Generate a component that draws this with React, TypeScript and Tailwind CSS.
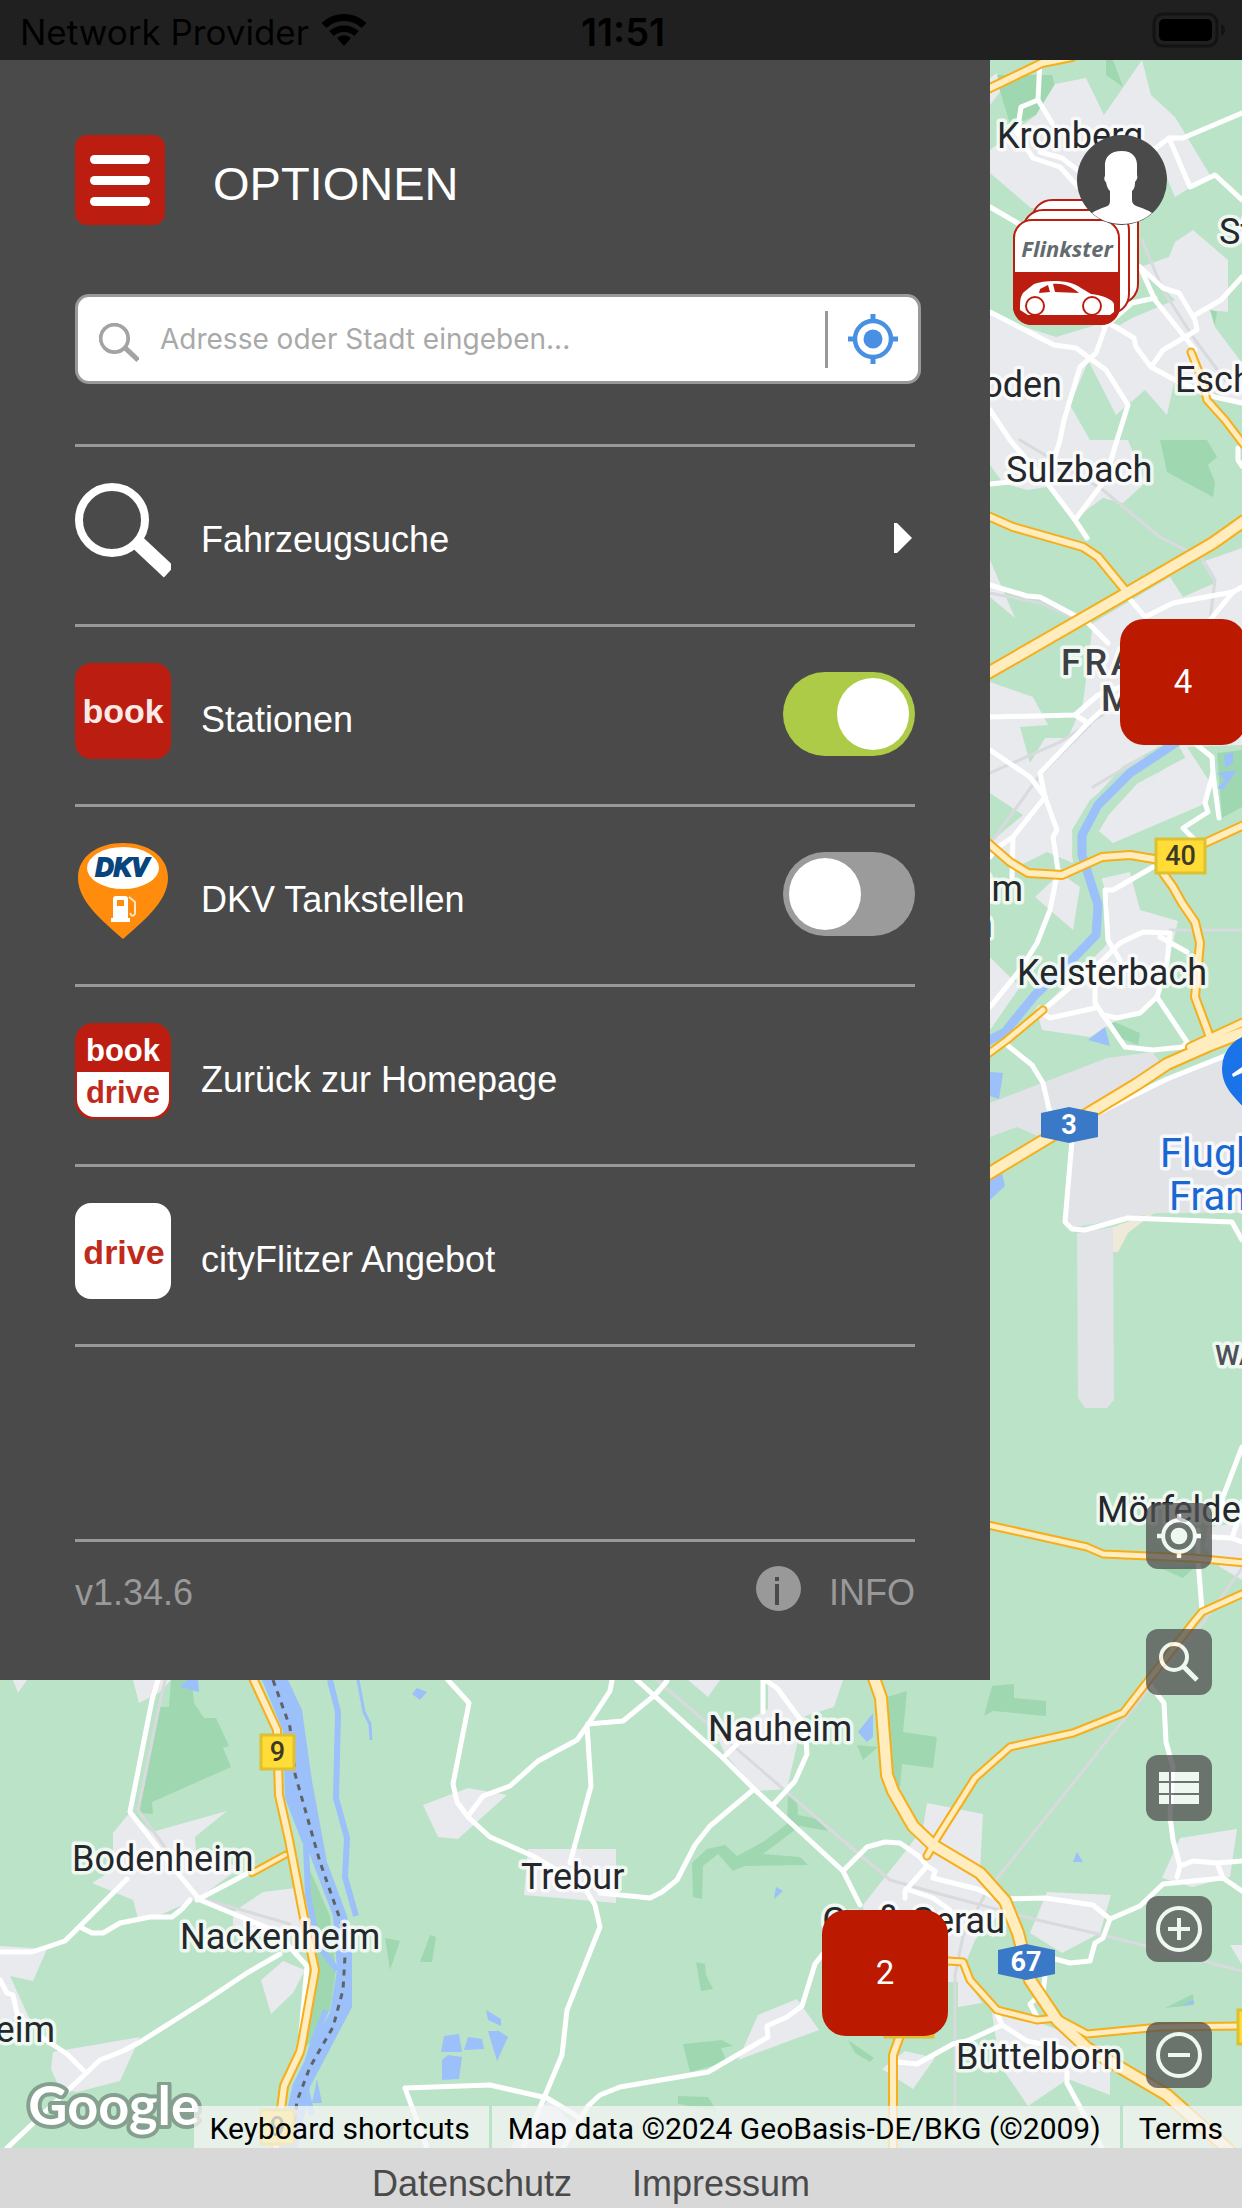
import { useState } from "react";
import type { ReactNode } from "react";

const HELVETICA = "font-['Liberation_Sans',Arial,sans-serif]";
const ROBOTO = "font-['Roboto',sans-serif]";

/* ---------- map data ---------- */

const urban = [
  "1055,84 1086,78 1104,115 1142,60 1151,95 1175,117 1210,175 1175,197 1161,163 1150,190 1136,200 1031,208 990,173 990,150 1036,115",
  "990,78 997,73 1000,92 990,105",
  "1140,267 1169,257 1175,242 1193,230 1228,260 1228,312 1210,310 1215,327 1242,363 1242,403 1175,378 1167,415 1145,390 1116,415 1088,360 1078,355 1056,337 1106,322 1120,325 1132,318 1175,300",
  "995,317 1056,337 1092,352 1070,405 1090,440 1128,440 1145,483 1123,503 1103,498 1073,520 1047,487 1027,490 1003,483 990,465 990,312",
  "1035,345 1043,355 1041,370",
  "990,560 1015,618 990,597",
  "990,682 1033,697 1048,725 1020,727 1030,763 1045,738 1068,738 1083,703 1093,623 1170,577 1183,597 1215,583 1202,562 1242,548 1242,745 1187,747 1143,787 1135,780 1160,745 1090,800 1072,830 1073,863 1047,852 1015,868 993,840 1023,815 990,793",
  "1187,747 1213,787 1202,805 1113,843 1094,827 1135,780 1143,787",
  "1035,897 1060,873 1080,887 1073,930",
  "1095,880 1130,872 1140,910 1178,921 1160,997 1140,1013 1117,1020 1090,1037 1042,1030 1036,1008 1070,977 1103,933",
  "990,957 1020,987 990,1030",
  "1207,1527 1242,1523 1242,1580 1220,1567 1205,1547",
  "133,1680 171,1680 160,1692 139,1703",
  "13,1680 27,1680 18,1693",
  "130,1812 152,1832 227,1811 195,1837 196,1850 240,1868 200,1897 160,1915 138,1918 133,1900 92,1883 113,1870 113,1833",
  "233,1912 263,1892 295,1888 307,1935 270,1935 233,1925",
  "261,1980 283,1961 305,1970 293,1993 271,2014",
  "0,1946 47,1949 33,1981 10,1976 30,2020 0,2020",
  "53,2052 140,2037 120,2081 77,2092 60,2089 51,2069",
  "768,1680 843,1680 834,1707 805,1716 797,1745 787,1789 757,1791 725,1754 717,1737 768,1709",
  "688,1680 720,1680 708,1697",
  "423,1805 468,1788 507,1795 458,1839 438,1837",
  "528,1849 616,1849 616,1903 524,1895",
  "758,2015 797,1999 819,2030 738,2060",
  "548,2100 575,2125 563,2148 510,2148",
  "927,1803 983,1814 980,1870 1008,1905 975,1940 958,1982 870,1982 863,1905 907,1849 923,1828",
  "992,2013 1040,2023 1087,2041 1110,2060 1110,2095 1068,2079 1028,2106 1000,2065",
  "1047,1892 1111,1895 1100,1933 1062,1953 1030,1933",
  "1180,1838 1237,1829 1230,1877 1192,1887 1162,1878",
  "958,1964 982,2003 958,2007",
  "905,2051 935,2058 913,2089 882,2069",
  "1230,1945 1242,1945 1242,1965",
];

const airport = [
  "990,1103 1107,1058 1152,1052 1165,1068 1080,1120 1040,1137 1017,1127 990,1137",
  "1095,1112 1167,1077 1242,1047 1242,1213 1157,1213 1070,1228 1063,1220 1070,1140",
  "1077,1233 1113,1227 1114,1400 1107,1408 1085,1408 1078,1398",
];

const forest = [
  "995,75 1052,75 1062,113 1040,113 1011,127",
  "1106,60 1113,60 1123,87 1106,75",
  "1160,440 1207,440 1217,457 1208,465 1215,482 1213,497 1187,483 1167,472",
  "1195,302 1217,312 1214,330",
  "1110,1020 1140,1033 1138,1045 1120,1038",
  "1217,753 1242,750 1242,807 1222,818",
  "1225,613 1232,613 1236,622 1220,622",
  "171,1680 192,1680 194,1703 204,1718 216,1718 229,1746 223,1748 231,1767 168,1795 152,1802 153,1814 139,1813 160,1707 169,1707",
  "309,1868 330,1916 336,1970 330,2010 312,2040 304,2050 316,1970 310,1920",
  "385,1938 400,1941 390,1970",
  "692,1863 707,1849 725,1845 737,1856 763,1842 787,1824 788,1796 797,1800 798,1815 818,1819 828,1831 800,1826 763,1854 800,1857 808,1865 745,1866 733,1871 718,1854 703,1866 702,1899 693,1897",
  "696,1962 705,1964 706,1975 713,1989 701,1991",
  "430,1935 436,1937 432,1962 420,1962",
  "683,2044 722,2040 733,2046 721,2048 727,2062 690,2072",
  "678,2096 708,2097 717,2111 678,2104",
  "887,1697 907,1691 903,1732 937,1737 933,1768 902,1764 900,1787 893,1787",
  "857,1745 878,1747 863,1760",
  "992,1686 1014,1684 1014,1698 1046,1701 1046,1716 993,1711 984,1716",
  "848,2040 874,2058 870,2062 855,2053",
  "1165,2008 1193,1994 1194,2005",
  "1160,1568 1196,1566 1183,1578",
];

const water = [
  "1224,755 1233,752 1233,763 1225,768",
  "1217,773 1237,770 1223,790 1217,788 1225,780",
  "1088,1040 1105,1027 1110,1046",
  "990,1072 1003,1073 999,1099 990,1096",
  "990,1200 1005,1186 1002,1173 990,1180",
  "180,1687 187,1680 198,1680 199,1692",
  "262,1680 283,1731 285,1798 302,1842 310,1855 333,1916 337,1970 330,2012 308,2054 293,2084 285,2118 281,2148 298,2148 310,2087 352,2007 352,1949 347,1916 327,1862 312,1781 302,1710 288,1680",
  "317,2079 322,2103 312,2103",
  "412,1694 417,1688 427,1692 420,1700",
  "486,2010 501,2019 501,2026 488,2020",
  "444,2036 459,2034 462,2052 441,2052",
  "468,2037 482,2039 484,2049 464,2050",
  "488,2031 499,2031 508,2037 497,2061",
  "448,2055 462,2057 459,2079 442,2080 442,2060",
  "776,1887 783,1891 774,1899",
  "858,1732 873,1713 873,1737 867,1742",
  "1073,1862 1077,1852 1083,1862",
  "1180,2006 1193,2000 1194,2004",
];

const streams = [
  "330,1680 338,1712 336,1798 347,1838 345,1877 356,1916",
  "306,1845 308,1895 318,1945 337,1970",
  "326,2010 314,2040 308,2060",
  "306,2090 312,2115",
];

const rails = [
  "1142,240 1163,290 1195,340 1225,380",
  "1020,440 1103,490 1160,537 1202,558 1215,580 1210,620",
  "990,593 1040,603 1090,625",
  "990,773 1060,742 1110,710",
  "993,840 1040,775 1090,725",
  "1093,787 1143,757",
  "1170,930 1242,930",
  "657,1680 840,1838 890,1880 940,1894 1033,1919 1107,1936 1242,1971",
  "1242,1568 1205,1620 1125,1718 987,1891 963,1936 955,1975 955,2146",
  "165,1680 158,1712 138,1810 180,1868",
  "200,1898 290,1924",
];

const roads = [
  "1040,60 1038,100 1021,107 1017,133 1033,158 1060,167 1078,187",
  "1038,100 1052,123",
  "1040,152 1062,158 1080,172",
  "1100,165 1156,148 1169,138 1183,138 1242,113",
  "1169,138 1190,187 1215,175 1242,200",
  "990,207 1021,225",
  "990,312 1054,345 1076,348 1106,370 1128,405 1117,440 1105,480 1075,520",
  "1106,325 1096,353 1080,367 1064,420 1060,440 1047,483 1075,520 1087,538",
  "990,410 1010,440 1040,475",
  "1140,267 1155,300 1195,350",
  "1140,267 1163,288 1179,293 1195,320 1197,330 1163,350 1151,367 1136,347 1134,338 1112,325",
  "1195,315 1221,300 1242,277",
  "1104,327 1132,303 1155,298",
  "1151,367 1175,380 1215,397 1242,403",
  "990,484 1010,482",
  "1238,448 1238,460 1242,466",
  "990,585 1027,596 1040,597 1087,622 1108,643",
  "1128,597 1145,617 1173,603 1233,592 1242,587",
  "1233,592 1210,620",
  "990,717 1075,715 1098,695 1120,687",
  "1075,715 1088,723 1110,703",
  "1088,723 1040,773 1045,797 1057,830 1053,837 1058,870 1050,910 1037,943 1020,970 990,1007",
  "1045,797 1013,837 998,847 990,857",
  "1013,837 1012,877",
  "990,750 1030,777 1045,797",
  "1197,745 1212,757 1213,773 1205,803 1208,812 1183,828 1195,840",
  "1213,773 1219,818",
  "1153,867 1113,890 1105,890 1108,940 1120,960",
  "1043,1010 1103,960 1120,943 1143,932 1170,933 1167,963 1157,997 1140,1013 1117,1018 1103,1015 1095,1003 1095,970",
  "1095,1008 1050,1018 1040,1012",
  "1103,1015 1125,1047 1153,1050 1183,1047 1187,1042 1157,997",
  "1160,937 1187,952",
  "1007,1045 1032,1065 1043,1083 1050,1113",
  "1072,1140 1065,1222 1072,1229 1085,1230 1128,1218 1232,1222 1242,1240",
  "1098,1113 1167,1079 1242,1049",
  "1242,1447 1223,1497 1220,1520",
  "1212,1537 1232,1538 1242,1542",
  "1232,1538 1238,1520",
  "1198,1530 1198,1560 1202,1610",
  "1146,1680 1164,1703 1166,1742 1173,1767 1170,1817 1173,1840 1180,1866 1177,1877",
  "1180,1866 1193,1861 1217,1863 1242,1861",
  "1217,1863 1223,1878",
  "158,1680 152,1700 130,1812 175,1870 200,1900 275,1931 307,1966 301,2033",
  "0,1952 32,1952 65,1941 127,1879",
  "80,1927 92,1933 103,1933 120,1923 150,1917 172,1917 182,1909 190,1900",
  "197,1900 250,1872",
  "0,1980 7,1993 13,1995 17,2013",
  "43,2038 67,2054 83,2070",
  "280,1954 247,1973 205,2001 140,2042 123,2051 100,2060 7,2148",
  "448,1680 469,1703 453,1784 457,1802 468,1817 490,1837 533,1856 560,1872",
  "612,1680 610,1691 587,1726 591,1786 570,1863",
  "587,1726 577,1740 538,1761 510,1786 483,1796 468,1816",
  "588,1724 623,1721 655,1695 667,1681",
  "637,1680 723,1758 753,1788 843,1871 860,1905",
  "753,1790 710,1826 695,1845 677,1880 662,1892 650,1898 600,1893",
  "587,1892 595,1905 600,1927 567,2010 562,2055 523,2148",
  "405,2088 490,2085 547,2098 580,2118",
  "405,2088 427,2148",
  "563,2148 588,2106 600,2095 620,2087 708,2072 768,2037 767,2026 787,2017 802,2006 815,1964 830,1945",
  "763,1680 763,1712",
  "765,1680 777,1688 805,1726 807,1754 795,1781 773,1805",
  "723,1758 737,1744",
  "843,1871 867,1847 885,1842 900,1843 920,1857 927,1866 935,1871 933,1878 977,1889 1000,1899 1045,1898 1093,1905 1110,1919 1140,1906 1163,1884 1223,1878 1242,1891",
  "1110,1919 1103,1938 1095,1943 1090,1961 1070,1963 1055,1959",
  "927,1866 905,1891 905,1898",
  "906,1889 933,1898 950,1910 953,1930",
  "1045,1976 1043,1992 1030,2004 1037,2017",
  "997,2013 1002,2025 1027,2041 1060,2048",
  "1002,2025 967,2041 953,2044 917,2064 897,2062",
  "1067,2072 1067,2083 1102,2148",
  "1084,2045 1086,2035",
];

const motorways = [
  { points: "988,89 1042,63 1072,57", width: 10 },
  { points: "1191,352 1201,377 1207,400 1225,420 1244,445", width: 9 },
  { points: "988,516 1013,527 1083,547 1098,557 1125,590", width: 10 },
  { points: "1125,590 1112,598", width: 6 },
  { points: "988,673 1127,593 1170,568 1213,543 1244,521", width: 14 },
  { points: "988,843 1010,862 1028,873 1062,875 1102,857 1130,855 1160,860 1180,855 1205,843 1244,825", width: 10 },
  { points: "1163,873 1173,887 1182,903 1195,922 1200,943 1195,997 1211,1040", width: 10 },
  { points: "988,1054 1007,1040 1043,1010", width: 9 },
  { points: "1190,1047 1244,1022", width: 10 },
  { points: "988,1174 1137,1084 1167,1064 1210,1045 1244,1032", width: 14 },
  { points: "988,1525 1087,1547 1103,1554 1193,1558 1244,1563", width: 9 },
  { points: "1244,1593 1202,1612 1193,1623 1123,1713 1073,1733 1010,1747 975,1778 937,1838 927,1856", width: 9 },
  { points: "253,1678 277,1730 279,1795 289,1840 303,1913 315,1970 302,2043 300,2052 284,2086 276,2148", width: 10 },
  { points: "252,1873 285,1855", width: 8 },
  { points: "948,1961 963,1962 970,1980 997,2010 1037,2020 1057,2018 1087,2034 1160,2027 1244,2026", width: 9 },
  { points: "902,2030 893,2055 893,2150", width: 10 },
  { points: "874,1678 881,1698 887,1775 893,1791 913,1826 933,1845 980,1873 1005,1901 1018,1933 1030,1980 1057,2020 1087,2048 1167,2095 1229,2150", width: 14 },
];

const places: { x: number; y: number; name: string; end?: boolean }[] = [
  { x: 997, y: 148, name: "Kronberg" },
  { x: 1219, y: 244, name: "Steinbach" },
  { x: 1062, y: 397, name: "Bad Soden", end: true },
  { x: 1175, y: 392, name: "Eschborn" },
  { x: 1006, y: 482, name: "Sulzbach" },
  { x: 1023, y: 901, name: "Hattersheim", end: true },
  { x: 993, y: 937, name: "am Main", end: true },
  { x: 1017, y: 985, name: "Kelsterbach" },
  { x: 1097, y: 1522, name: "Mörfelden" },
  { x: 708, y: 1741, name: "Nauheim" },
  { x: 521, y: 1889, name: "Trebur" },
  { x: 72, y: 1871, name: "Bodenheim" },
  { x: 180, y: 1949, name: "Nackenheim" },
  { x: 55, y: 2042, name: "Mommenheim", end: true },
  { x: 1005, y: 1933, name: "Groß-Gerau", end: true },
  { x: 956, y: 2069, name: "Büttelborn" },
];

function FederalRoad({ x, y, width, label }: { x: number; y: number; width: number; label: string }) {
  return (
    <g>
      <rect x={x + 1} y={y + 1} width={width - 2} height="34" fill="#ffdc36" stroke="#dfc030" strokeWidth="3" />
      <text x={x + width / 2} y={y + 27} textAnchor="middle" fontSize="27" fontWeight="500" fill="#3c3a28">
        {label}
      </text>
    </g>
  );
}

function AutobahnShield({ x, y, label }: { x: number; y: number; label: string }) {
  return (
    <g>
      <path d={`M${x} ${y + 6}L${x + 28} ${y}L${x + 57} ${y + 6}V${y + 30}L${x + 28} ${y + 36}L${x} ${y + 30}Z`} fill="#3a78c8" />
      <text x={x + 28} y={y + 27} textAnchor="middle" fontSize="27" fontWeight="700" fill="#fff">
        {label}
      </text>
    </g>
  );
}

function MapCanvas() {
  return (
    <svg
      className={`absolute inset-0 h-full w-full ${ROBOTO}`}
      viewBox="0 60 1242 2088"
      preserveAspectRatio="xMinYMin slice"
      role="img"
      aria-label="Karte"
    >
      <rect y="60" width="1242" height="2088" fill="#bbe3c8" />
      {forest.map((p) => <polygon key={p} points={p} fill="#9fd8b0" />)}
      {urban.map((p) => <polygon key={p} points={p} fill="#e8eaed" />)}
      {airport.map((p) => <polygon key={p} points={p} fill="#e1e3e7" />)}
      <polygon points="1113,1227 1155,1212 1128,1233 1118,1252 1113,1252" fill="#efe9da" />
      <g fill="none" strokeLinejoin="round">
        <polyline points="1180,748 1130,775 1100,808 1084,835 1083,855 1098,905 1096,940 1070,965 1035,1000" stroke="#bbe3c8" strokeWidth="22" />
        <polyline points="1180,740 1130,773 1098,805 1082,835 1082,855 1098,905 1096,935 1070,962 1035,995 1005,1032 986,1042" stroke="#9cc0f9" strokeWidth="9" />
        {streams.map((p) => <polyline key={p} points={p} stroke="#9cc0f9" strokeWidth="6" />)}
        <polyline points="358,1680 364,1712 370,1724 371,1740" stroke="#9cc0f9" strokeWidth="3" />
      </g>
      {water.map((p) => <polygon key={p} points={p} fill="#9cc0f9" />)}
      <polyline
        points="273,1680 290,1727 295,1774 320,1862 340,1919 345,1956 343,1990 333,2027 310,2067 297,2101 291,2148"
        fill="none"
        stroke="#5f6368"
        strokeWidth="3"
        strokeDasharray="6 6"
      />
      <g fill="none" strokeLinejoin="round" strokeLinecap="round">
        {rails.map((p) => <polyline key={p} points={p} stroke="#d8dade" strokeWidth="3" />)}
        {roads.map((p) => <polyline key={p} points={p} stroke="#fff" strokeWidth="5" />)}
        {motorways.map((m) => <polyline key={m.points} points={m.points} stroke="#f6ae1a" strokeWidth={m.width} />)}
        {motorways.map((m) => <polyline key={m.points} points={m.points} stroke="#ffecbf" strokeWidth={m.width - 4} />)}
      </g>
      <FederalRoad x={1155} y={838} width={51} label="40" />
      <FederalRoad x={260} y={1734} width={35} label="9" />
      <FederalRoad x={260} y={2109} width={35} label="9" />
      <FederalRoad x={884} y={2002} width={50} label="44" />
      <FederalRoad x={1237} y={2009} width={50} label="42" />
      <AutobahnShield x={1041} y={1107} label="3" />
      <AutobahnShield x={998} y={1944} label="67" />
      <path d="M1256 1034a34 34 0 0 0-34 34c0 20 13 29 24 42h10V1034Z" fill="#1a73e8" />
      <path d="M1232 1074l10-7V1073l-9 4Z" fill="#fff" />
      <g stroke="#fff" strokeOpacity=".75" strokeWidth="7" strokeLinejoin="round" className="[paint-order:stroke]">
        <g fontSize="36" fill="#24272b">
          {places.map((p) => (
            <text key={p.name} x={p.x} y={p.y} textAnchor={p.end ? "end" : "start"}>
              {p.name}
            </text>
          ))}
        </g>
        <g fontSize="36" fontWeight="500" fill="#3c4043">
          <text x="1061" y="675" className="tracking-widest">FRANKFURT</text>
          <text x="1101" y="711">MAIN</text>
        </g>
        <g fontSize="40" fill="#1967d2">
          <text x="1160" y="1167">Flughafen</text>
          <text x="1169" y="1210">Frankfurt</text>
        </g>
        <text x="1215" y="1365" fontSize="28" fontWeight="500" fill="#4d5156">WALLDORF</text>
      </g>
    </svg>
  );
}

/* ---------- icons ---------- */

function TargetIcon({ className }: { className: string }) {
  return (
    <svg viewBox="0 0 50 50" className={className} fill="none" stroke="currentColor" aria-hidden="true">
      <circle cx="25" cy="25" r="18" strokeWidth="4.500" />
      <circle cx="25" cy="25" r="9.500" fill="currentColor" stroke="none" />
      <path d="M25 0v8M25 42v8M0 25h8M42 25h8" strokeWidth="5" />
    </svg>
  );
}

function LensIcon({ className, small }: { className: string; small?: boolean }) {
  return (
    <svg viewBox="0 0 96 96" className={className} fill="none" stroke="currentColor" aria-hidden="true">
      <circle cx="37" cy="37" r="33" strokeWidth={small ? 9 : 8} />
      <path d="M62 59L94 89" strokeWidth={small ? 12 : 15} />
    </svg>
  );
}

function Tile({ children }: { children: ReactNode }) {
  return (
    <svg viewBox="0 0 96 96" className={`mb-2.5 size-24 shrink-0 ${HELVETICA}`} aria-hidden="true">
      {children}
    </svg>
  );
}

function BookTile() {
  return (
    <Tile>
      <rect width="96" height="96" rx="16" fill="#bb1e10" />
      <text x="48" y="60" textAnchor="middle" fontSize="34" fontWeight="700" fill="#fbe9e7">book</text>
    </Tile>
  );
}

function DkvTile() {
  return (
    <Tile>
      <path d="M48 0C23 0 3 13 3 35c0 24 27 45 45 61 18-16 45-37 45-61C93 13 73 0 48 0Z" fill="#ff8c0c" />
      <ellipse cx="48" cy="25" rx="36" ry="21" fill="#fff" />
      <text x="47" y="33" textAnchor="middle" fontSize="25" fontWeight="700" fontStyle="italic" fill="#08457e" stroke="#08457e" strokeWidth="2">DKV</text>
      <path d="M38 56q0-3 3-3h9q3 0 3 3v19h2v4H36v-4h2ZM42 57v6h7v-6Z" fill="#fff" fillRule="evenodd" />
      <path d="M54 54l6 5v12q-3 4-5-1" fill="none" stroke="#ffe3c2" strokeWidth="2" />
    </Tile>
  );
}

function BookDriveTile() {
  return (
    <Tile>
      <rect width="96" height="96" rx="18" fill="#bb1e10" />
      <path d="M2 49H94V76a18 18 0 0 1-18 18H20A18 18 0 0 1 2 76Z" fill="#fff" />
      <text x="48" y="38" textAnchor="middle" fontSize="31" fontWeight="700" fill="#fff">book</text>
      <text x="48" y="80" textAnchor="middle" fontSize="31" fontWeight="700" fill="#c02a1d">drive</text>
    </Tile>
  );
}

function DriveTile() {
  return (
    <Tile>
      <rect width="96" height="96" rx="16" fill="#fff" />
      <text x="49" y="61" textAnchor="middle" fontSize="34" fontWeight="700" fill="#c02a1d">drive</text>
    </Tile>
  );
}

/* ---------- page parts ---------- */

function StatusBar() {
  return (
    <header className="grid h-[60px] grid-cols-3 items-center bg-[#202020] pt-1 pr-4 pl-5 font-['Inter',sans-serif] text-[35px] leading-none text-black">
      <div className="flex items-center gap-3 whitespace-nowrap">
        <span>Network Provider</span>
        <svg viewBox="0 0 46 34" className="mb-1 h-[34px] w-[46px]" fill="none" stroke="currentColor" aria-hidden="true">
          <path d="M3 12.500a29 29 0 0 1 40 0" strokeWidth="7" />
          <path d="M10.500 20.500a18.500 18.500 0 0 1 25 0" strokeWidth="6.500" />
          <path d="M23 33l-7-8a10.500 10.500 0 0 1 14 0Z" fill="currentColor" stroke="none" />
        </svg>
      </div>
      <time className="text-center text-[38px] font-semibold">11:51</time>
      <svg viewBox="0 0 74 36" className="mb-1 h-9 w-[74px] justify-self-end" aria-label="Akku voll" role="img">
        <rect x="2" y="2" width="63" height="32" rx="9" fill="none" stroke="#131313" strokeWidth="3" />
        <rect x="7" y="7" width="53" height="22" rx="5" fill="#000" />
        <path d="M69 12q4 2 4 6t-4 6Z" fill="#131313" />
      </svg>
    </header>
  );
}

function Row({ icon, label, htmlFor, children }: { icon: ReactNode; label: string; htmlFor?: string; children?: ReactNode }) {
  return (
    <li className="flex h-[180px] items-center gap-[30px] border-t-3 border-[#999]">
      {icon}
      {htmlFor ? (
        <label htmlFor={htmlFor} className="mt-2 grow">{label}</label>
      ) : (
        <a href="#" className="mt-2 grow">{label}</a>
      )}
      {children}
    </li>
  );
}

function Toggle({ id, initial }: { id: string; initial: boolean }) {
  const [on, setOn] = useState(initial);
  return (
    <input
      id={id}
      type="checkbox"
      role="switch"
      checked={on}
      onChange={() => setOn(!on)}
      className="mb-1 flex h-[84px] w-[132px] shrink-0 cursor-pointer appearance-none rounded-full bg-[#9b9b9b] p-1.5 before:size-[72px] before:rounded-full before:bg-white checked:justify-end checked:bg-[#adcb47]"
    />
  );
}

function OptionsPanel() {
  return (
    <aside className={`relative w-full max-w-[990px] bg-[#4a4a4a] px-[75px] pt-[75px] pb-[69px] text-4xl/10 text-white ${HELVETICA}`}>
      <div className="flex h-[90px] items-center gap-12">
        <button type="button" aria-label="Menü" className="flex size-[90px] flex-col items-center justify-center gap-3 rounded-xl bg-[#bb1e10]">
          <span className="h-[9px] w-[60px] rounded-full bg-white" />
          <span className="h-[9px] w-[60px] rounded-full bg-white" />
          <span className="h-[9px] w-[60px] rounded-full bg-white" />
        </button>
        <h1 className="mt-2 text-[47px]">OPTIONEN</h1>
      </div>

      <form className="mt-[69px] -mr-1.5 flex h-[90px] items-center rounded-[14px] border-3 border-[#999] bg-white pl-[21px]">
        <LensIcon small className="mt-2 size-10 shrink-0 text-[#a3a3a3]" />
        <input
          type="text"
          aria-label="Adresse oder Stadt"
          placeholder="Adresse oder Stadt eingeben..."
          className="h-full min-w-0 grow pl-[21px] font-['Inter',sans-serif] text-[28px] text-[#4a4a4a] outline-none placeholder:text-[#a9a9a9]"
        />
        <span className="h-[57px] w-[3px] bg-[#999]" />
        <button type="button" aria-label="Standort verwenden" className="px-5 text-[#4a90e2]">
          <TargetIcon className="size-[50px]" />
        </button>
      </form>

      <ul className="mt-[60px] border-b-3 border-[#999]">
        <Row icon={<LensIcon className="mb-2.5 size-24 shrink-0" />} label="Fahrzeugsuche">
          <svg viewBox="0 0 18 30" className="mt-1 mr-[3px] h-[30px] w-[18px]" fill="currentColor" aria-hidden="true">
            <path d="M0 0H3L18 15L3 30H0Z" />
          </svg>
        </Row>
        <Row icon={<BookTile />} label="Stationen" htmlFor="stations">
          <Toggle id="stations" initial />
        </Row>
        <Row icon={<DkvTile />} label="DKV Tankstellen" htmlFor="fuel">
          <Toggle id="fuel" initial={false} />
        </Row>
        <Row icon={<BookDriveTile />} label="Zurück zur Homepage" />
        <Row icon={<DriveTile />} label="cityFlitzer Angebot" />
      </ul>

      <div className="mt-[192px] flex items-center justify-between border-t-3 border-[#999] pt-6 leading-9 text-[#999]">
        <span className="mt-2">v1.34.6</span>
        <button type="button" className="flex items-center gap-7">
          <svg viewBox="0 0 45 45" className="size-[45px]" aria-hidden="true">
            <circle cx="22.500" cy="22.500" r="22.500" fill="#999" />
            <path d="M19 11h4v4h-4ZM19 18h4v21h-4Z" fill="#4a4a4a" />
          </svg>
          <span className="mt-2">INFO</span>
        </button>
      </div>
    </aside>
  );
}

function ClusterMarker({ count, className }: { count: number; className: string }) {
  return (
    <button type="button" className={`absolute flex size-[126px] items-center justify-center rounded-3xl bg-[#bb1a00] text-[33px] text-white ${ROBOTO} ${className}`}>
      {count}
    </button>
  );
}

function FlinksterMarker() {
  return (
    <button type="button" aria-label="Flinkster Station" className="absolute top-[138px] left-[1012px]">
      <svg viewBox="0 0 128 128" className="size-32 font-['Noto_Sans',sans-serif]">
        <g fill="#fff" stroke="#bb1e10" strokeWidth="2">
          <rect x="20" y="2" width="106" height="104" rx="20" />
          <rect x="11" y="12" width="106" height="104" rx="20" />
          <rect x="2" y="22" width="105" height="104" rx="18" />
        </g>
        <path d="M1 74H108V108a19 19 0 0 1-19 19H20A19 19 0 0 1 1 108Z" fill="#bb1e10" />
        <text x="55" y="59" textAnchor="middle" fontSize="22" fontWeight="700" fontStyle="italic" fill="#646b6f">Flinkster</text>
        <path d="M8 112c0-8 0-14 4-18l10-8c12-4 35-5 47 4l10 6c10 1 22 5 23 10v8l-4 3H16Z" fill="#fff" />
        <path d="M28 91l8-4 2 7-11 1ZM41 86c9-1 18 2 26 9l-24-1Z" fill="#bb1e10" />
        <g fill="#fff" stroke="#bb1e10" strokeWidth="2">
          <circle cx="23" cy="108" r="9" />
          <circle cx="80" cy="108" r="9" />
        </g>
      </svg>
    </button>
  );
}

function ProfileButton() {
  return (
    <button type="button" aria-label="Profil" className="absolute top-[75px] right-[75px]">
      <svg viewBox="0 0 90 90" className="size-[90px]">
        <circle cx="45" cy="45" r="45" fill="#4a4a4a" />
        <path d="M45 16c-12 0-18 6-17 17v8c-1 1-1 5 1 6 1 5 2 7 4 9v9c0 4-1 6-5 7-5 2-9 3-13 6 8 7 18 11 30 11s22-4 30-11c-4-3-8-4-13-6-6-2-7-4-7-8v-8c2-2 3-4 3-9 2-2 3-5 2-7v-7c1-11-5-17-15-17Z" fill="#fff" />
      </svg>
    </button>
  );
}

function MapButton({ label, children, className = "" }: { label: string; children: ReactNode; className?: string }) {
  return (
    <button type="button" aria-label={label} className={`flex size-[66px] items-center justify-center rounded-xl bg-[#4f4f4f] text-white opacity-75 ${className}`}>
      {children}
    </button>
  );
}

function MapControls() {
  return (
    <nav aria-label="Kartensteuerung" className="absolute right-[30px] bottom-[60px] flex flex-col gap-[60px]">
      <MapButton label="Mein Standort">
        <TargetIcon className="size-11" />
      </MapButton>
      <MapButton label="Suchen">
        <svg viewBox="0 0 40 40" className="size-10" fill="none" stroke="currentColor" aria-hidden="true">
          <circle cx="15" cy="15" r="13" strokeWidth="4" />
          <path d="M25 25L38 38" strokeWidth="5" />
        </svg>
      </MapButton>
      <MapButton label="Liste">
        <svg viewBox="0 0 40 34" className="h-[34px] w-10" fill="currentColor" aria-hidden="true">
          <path d="M0 1h10v9H0ZM12 1h28v9H12ZM0 12h10v10H0ZM12 12h28v10H12ZM0 24h10v9H0ZM12 24h28v9H12Z" />
        </svg>
      </MapButton>
      <MapButton label="Vergrößern" className="mt-[15px]">
        <svg viewBox="0 0 46 46" className="size-[46px]" fill="none" stroke="currentColor" strokeWidth="4" aria-hidden="true">
          <circle cx="23" cy="23" r="21" />
          <path d="M23 12v22M12 23h22" />
        </svg>
      </MapButton>
      <MapButton label="Verkleinern">
        <svg viewBox="0 0 46 46" className="size-[46px]" fill="none" stroke="currentColor" strokeWidth="4" aria-hidden="true">
          <circle cx="23" cy="23" r="21" />
          <path d="M12 23h22" />
        </svg>
      </MapButton>
    </nav>
  );
}

function Attribution() {
  return (
    <div className={`absolute right-0 bottom-0 flex h-[42px] gap-[3px] text-[30px] leading-[45px] whitespace-nowrap text-black ${ROBOTO}`}>
      <button type="button" className="bg-[#f5f5f5]/75 pr-[19px] pl-4">Keyboard shortcuts</button>
      <span className="bg-[#f5f5f5]/75 pr-[19px] pl-4">Map data ©2024 GeoBasis-DE/BKG (©2009)</span>
      <a href="#" className="bg-[#f5f5f5]/75 pr-[19px] pl-4">Terms</a>
    </div>
  );
}

function GoogleLogo() {
  return (
    <a href="#" className="absolute bottom-1 left-[26px]">
      <svg viewBox="0 0 176 62" className="h-[62px] w-44 font-['Lato',sans-serif]">
        <text x="88" y="43" textAnchor="middle" fontSize="54" fontWeight="700" fill="#fff" stroke="#86a08f" strokeWidth="8" strokeLinejoin="round" className="[paint-order:stroke]">
          Google
        </text>
      </svg>
    </a>
  );
}

export default function App() {
  return (
    <div className="flex min-h-screen flex-col">
      <StatusBar />
      <main className="relative grow overflow-hidden">
        <MapCanvas />
        <ClusterMarker count={4} className="top-[559px] left-[1120px]" />
        <ClusterMarker count={2} className="top-[1850px] left-[822px]" />
        <FlinksterMarker />
        <ProfileButton />
        <OptionsPanel />
        <MapControls />
        <GoogleLogo />
        <Attribution />
      </main>
      <footer className={`flex h-[60px] items-center justify-center gap-[60px] bg-[#d8d8d8] pt-3 pr-[60px] text-4xl/10 text-[#4a4a4a] ${HELVETICA}`}>
        <a href="#">Datenschutz</a>
        <a href="#">Impressum</a>
      </footer>
    </div>
  );
}
